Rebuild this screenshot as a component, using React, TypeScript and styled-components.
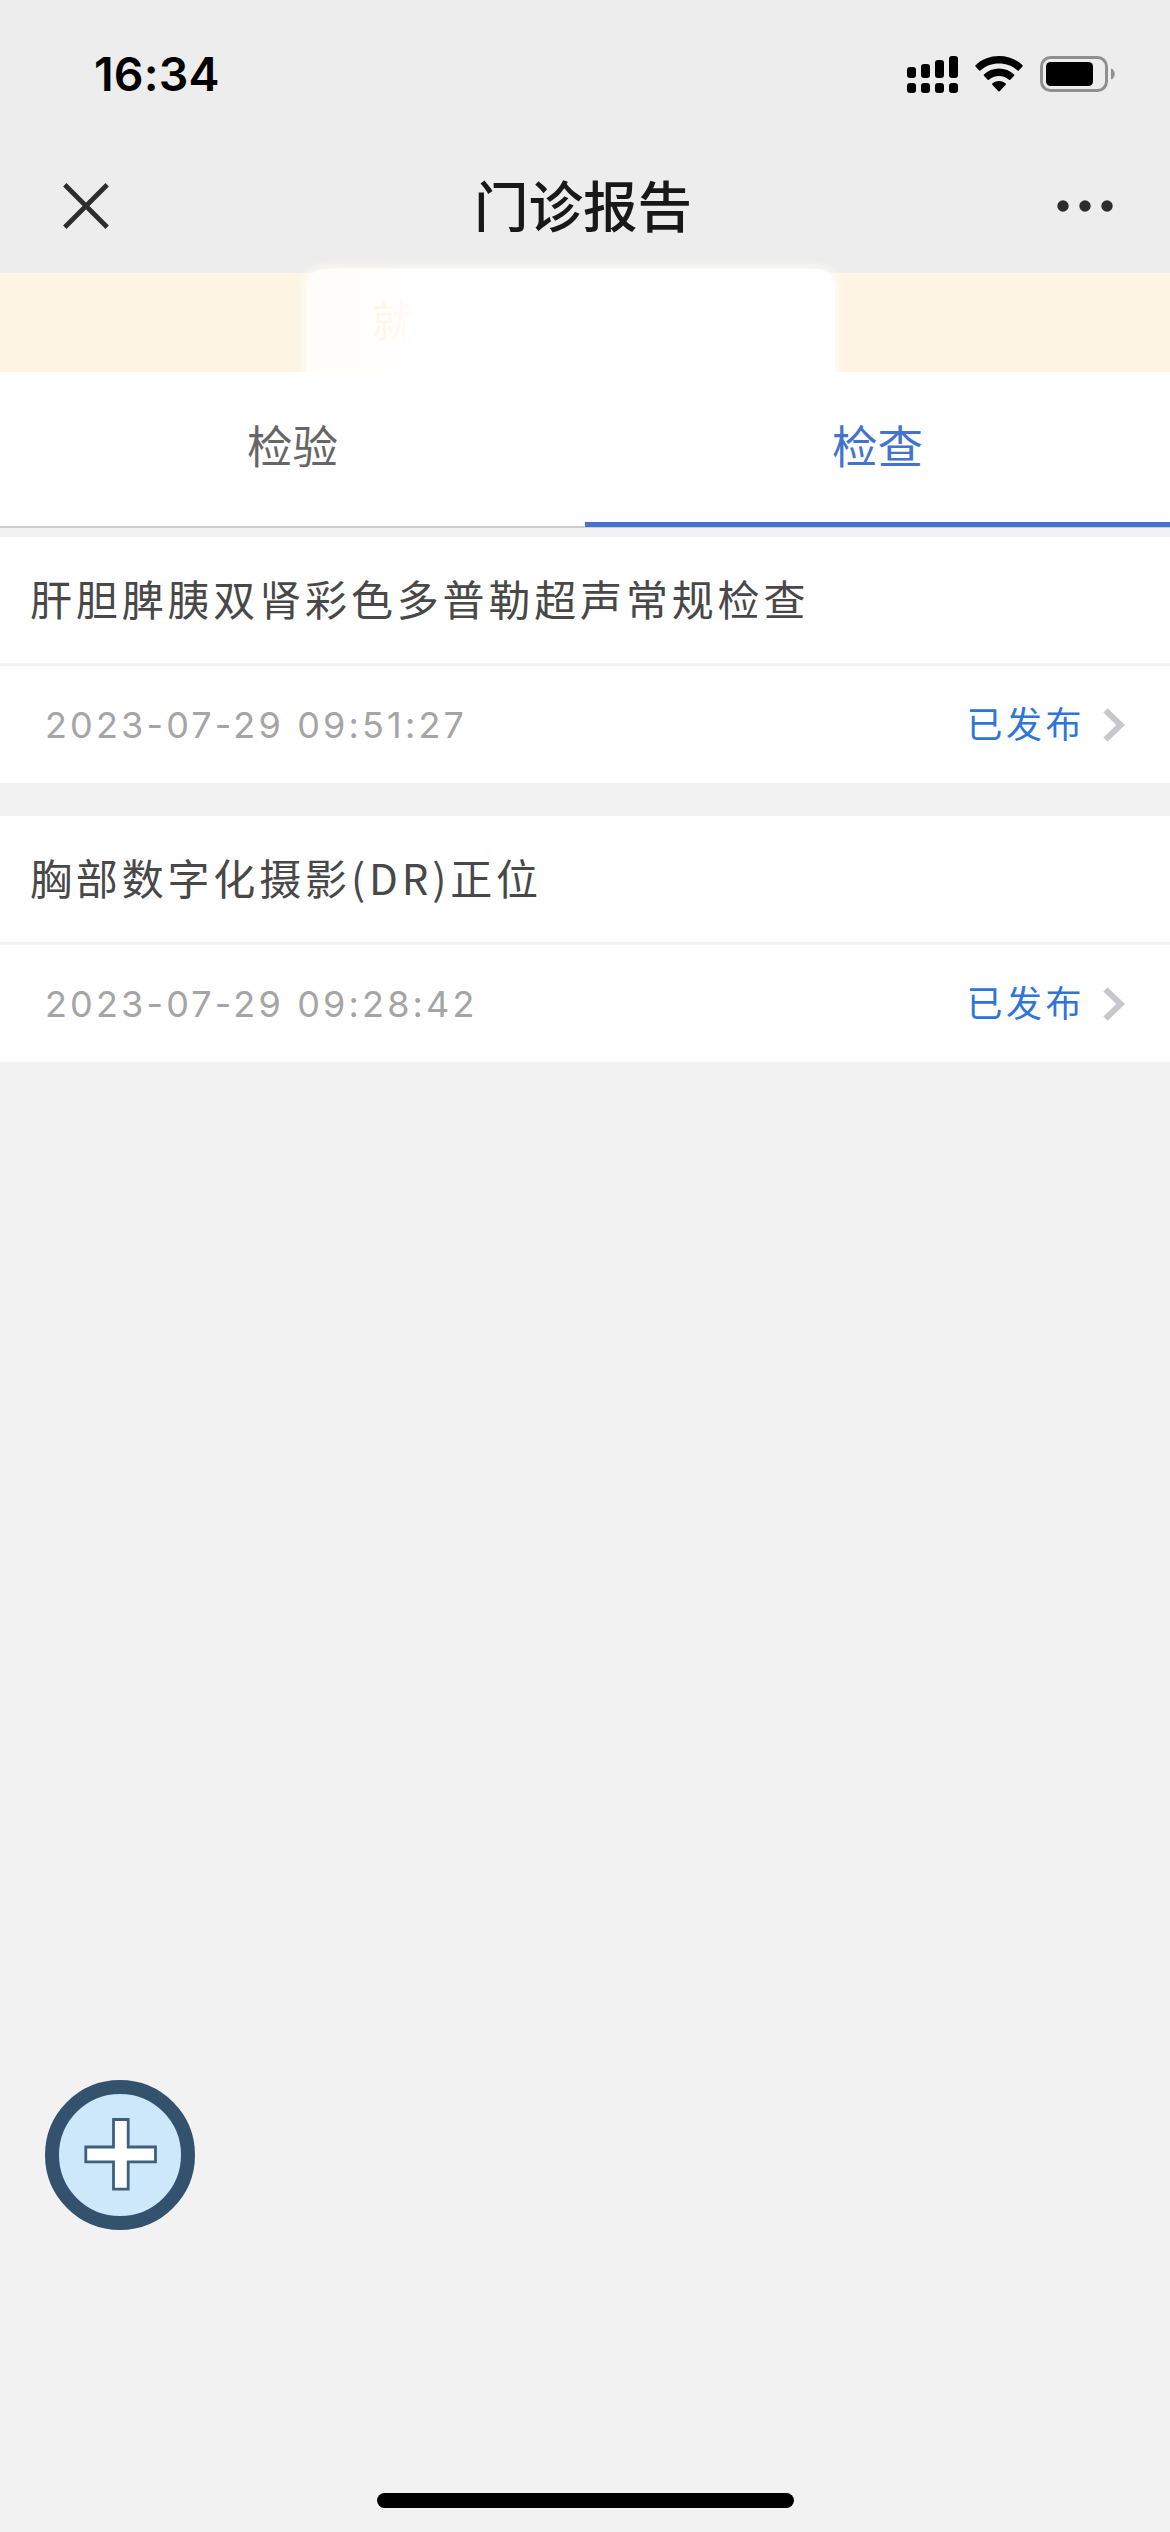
import React from "react";
import styled, { createGlobalStyle } from "styled-components";

const GlobalStyle = createGlobalStyle`
  * { box-sizing: border-box; }
  html, body { margin: 0; padding: 0; background: #f2f2f2; }
  body { font-family: Inter, "Noto Sans CJK SC", sans-serif; }
  button { border: 0; padding: 0; margin: 0; background: none; font: inherit; }
  svg { display: block; }
`;

const Screen = styled.main`
  position: relative;
  width: 1170px;
  height: 2532px;
  overflow: hidden;
  background: #f2f2f2;
`;

const Header = styled.header`
  height: 273px;
  background: #ededed;
`;

const StatusBar = styled.div`
  height: 148px;
  padding: 0 54px 0 94px;
  display: flex;
  align-items: center;
  justify-content: space-between;
`;

const Clock = styled.time`
  font-size: 46.500px;
  font-weight: 600;
  line-height: 56px;
  letter-spacing: 0.2px;
  color: #000;
`;

const StatusIcons = styled.div`
  display: flex;
  align-items: center;
  gap: 17px;
`;

const NavBar = styled.nav`
  height: 116px;
  padding: 0 57px 0 62px;
  display: grid;
  grid-template-columns: 194px 1fr 203px;
  align-items: center;
`;

const NavButton = styled.button<{ $end?: boolean }>`
  display: flex;
  justify-content: ${(p) => (p.$end ? "flex-end" : "flex-start")};
`;

const PageTitle = styled.h1`
  margin: 0;
  padding-top: 2px;
  text-align: center;
  font-size: 54.5px;
  font-weight: 500;
  line-height: 80px;
  color: #181818;
`;

const Banner = styled.div`
  height: 99px;
  padding-left: 306px;
  background: #fdf4e4;
`;

const BannerCover = styled.div`
  position: relative;
  width: 529px;
  height: 104px;
  top: -4px;
  padding: 28px 0 0 66px;
  border-radius: 18px 18px 0 0;
  background: linear-gradient(90deg, #fffdf9 0, #fffefc 90px, #fff 96px);
  box-shadow: 0 0 8px 2px #fffdf9;
  clip-path: inset(-10px -12px 1px -12px);
`;

const PatientLabel = styled.span`
  font-size: 42px;
  line-height: 50px;
  letter-spacing: 4px;
  color: transparent;
  background: linear-gradient(90deg, #fff5e4 0, #fff9ef 25px, #fffdfa 40px, #fff 60px);
  background-clip: text;
  -webkit-background-clip: text;
`;

const Tabs = styled.div`
  position: relative;
  height: 156px;
  display: flex;
  background: #fff;
  border-bottom: 2px solid #cfcfcf;
`;

const Tab = styled.button<{ $active?: boolean }>`
  flex: 1;
  height: 155px;
  padding-top: ${(p) => (p.$active ? 2 : 0)}px;
  padding-bottom: ${(p) => (p.$active ? 0 : 3)}px;
  border-bottom: ${(p) => (p.$active ? "5px solid #4372d0" : "0")};
  font-size: 45.5px;
  line-height: 60px;
  color: ${(p) => (p.$active ? "#4372d0" : "#666")};
`;

const ReportList = styled.section`
  padding-top: 9px;
  display: flex;
  flex-direction: column;
  gap: 33px;
`;

const ReportCard = styled.article`
  background: #fff;
`;

const ReportName = styled.h2`
  margin: 0;
  height: 129px;
  padding: 0 30px;
  border-bottom: 3px solid #f4f4f4;
  font-family: "Noto Sans CJK SC", sans-serif;
  font-size: 42px;
  font-weight: 400;
  line-height: 122px;
  letter-spacing: 3.84px;
  color: #484848;
`;

const ReportMeta = styled.div`
  height: 117px;
  padding: 0 45px;
  display: flex;
  align-items: center;
  justify-content: space-between;
  font-size: 36px;
`;

const ReportTime = styled.time`
  letter-spacing: 3.15px;
  color: #a5a5a5;
`;

const ReportStatus = styled.div`
  display: flex;
  align-items: center;
  gap: 18px;
  color: #2f75d8;
`;

const StatusLabel = styled.span`
  line-height: 44px;
  letter-spacing: 3.5px;
`;

const FloatingButton = styled.button`
  position: absolute;
  left: 45px;
  top: 2080px;
`;

const HomeIndicator = styled.div`
  position: absolute;
  left: 377px;
  top: 2493px;
  width: 417px;
  height: 15px;
  border-radius: 8px;
  background: #000;
`;

const SignalIcon = () => (
  <svg width="51" height="38" viewBox="0 0 51 38">
    {[12, 9, 5, 1].map((top, i) => (
      <g key={top}>
        <rect x={i * 14} y={top} width="9" height={23 - top} rx="3" />
        <rect x={i * 14} y="28" width="9" height="10" rx="3" />
      </g>
    ))}
  </svg>
);

const WifiIcon = () => (
  <svg width="48" height="38" viewBox="0 0 48 38">
    <path d="M24 1C14.8 1 6.400 4.400 .5 10.200Q0 10.800 .5 11.400L4.200 15.500Q4.800 16 5.400 15.500C10.400 10.900 17 8.400 24 8.400S37.600 10.900 42.600 15.500Q43.200 16 43.800 15.500L47.500 11.400Q48 10.800 47.500 10.200C41.600 4.400 33.200 1 24 1Z" />
    <path d="M24 13.500C18.200 13.500 12.900 15.700 8.900 19.500Q8.400 20.100 8.900 20.700L12.700 24.800Q13.300 25.300 13.900 24.800C16.600 22.400 20.100 20.900 24 20.900S31.400 22.400 34.100 24.800Q34.700 25.300 35.300 24.800L39.100 20.700Q39.600 20.100 39.100 19.500C35.100 15.700 29.800 13.500 24 13.500Z" />
    <path d="M24 26C21.400 26 19.100 26.900 17.300 28.500Q16.700 29.100 17.300 29.700L23.400 36.300Q24 36.900 24.600 36.300L30.700 29.700Q31.300 29.100 30.700 28.500C28.900 26.900 26.600 26 24 26Z" />
  </svg>
);

const BatteryIcon = () => (
  <svg width="76" height="36" viewBox="0 0 76 36">
    <rect x="1.500" y="1.500" width="65" height="33" rx="9" fill="none" stroke="#909090" strokeWidth="3" />
    <rect x="6" y="6" width="47" height="24" rx="4.500" />
    <path d="M71 12.500C76 14 76 22 71 23.500Z" fill="#909090" />
  </svg>
);

const CloseIcon = () => (
  <svg width="48" height="48" viewBox="0 0 48 48">
    <path d="M2.800 2.800L45.200 45.200M45.200 2.800L2.800 45.200" stroke="#2d2d2d" strokeWidth="4.800" />
  </svg>
);

const MoreIcon = () => (
  <svg width="56" height="12" viewBox="0 0 56 12" fill="#2d2d2d">
    <circle cx="6" cy="6" r="5.700" />
    <circle cx="28" cy="6" r="5.700" />
    <circle cx="50" cy="6" r="5.700" />
  </svg>
);

const ChevronIcon = () => (
  <svg width="22" height="34" viewBox="0 0 22 34">
    <path d="M2.500 2.300L17.700 17L2.500 31.700" fill="none" stroke="#c7c7cc" strokeWidth="6" />
  </svg>
);

const PlusIcon = () => (
  <svg width="150" height="150" viewBox="0 0 150 150">
    <circle cx="75" cy="75" r="68" fill="#cde7fb" stroke="#34526e" strokeWidth="14" />
    <path
      d="M68.500 39.500H83.200V67H110.500V81.800H83.200V109.200H68.500V81.800H40.800V67H68.500Z"
      fill="#fff"
      stroke="#3f5f7c"
      strokeWidth="2.800"
    />
  </svg>
);

const reports = [
  { name: "肝胆脾胰双肾彩色多普勒超声常规检查", time: "2023-07-29 09:51:27", status: "已发布" },
  { name: "胸部数字化摄影(DR)正位", time: "2023-07-29 09:28:42", status: "已发布" },
];

export default function App() {
  return (
    <>
      <GlobalStyle />
      <Screen>
        <Header>
          <StatusBar>
            <Clock>16:34</Clock>
            <StatusIcons>
              <SignalIcon />
              <WifiIcon />
              <BatteryIcon />
            </StatusIcons>
          </StatusBar>
          <NavBar>
            <NavButton aria-label="关闭">
              <CloseIcon />
            </NavButton>
            <PageTitle>门诊报告</PageTitle>
            <NavButton $end aria-label="更多">
              <MoreIcon />
            </NavButton>
          </NavBar>
        </Header>
        <Banner>
          <BannerCover>
            <PatientLabel>就</PatientLabel>
          </BannerCover>
        </Banner>
        <Tabs>
          <Tab>检验</Tab>
          <Tab $active>检查</Tab>
        </Tabs>
        <ReportList>
          {reports.map((report) => (
            <ReportCard key={report.time}>
              <ReportName>{report.name}</ReportName>
              <ReportMeta>
                <ReportTime>{report.time}</ReportTime>
                <ReportStatus>
                  <StatusLabel>{report.status}</StatusLabel>
                  <ChevronIcon />
                </ReportStatus>
              </ReportMeta>
            </ReportCard>
          ))}
        </ReportList>
        <FloatingButton aria-label="添加">
          <PlusIcon />
        </FloatingButton>
        <HomeIndicator />
      </Screen>
    </>
  );
}
